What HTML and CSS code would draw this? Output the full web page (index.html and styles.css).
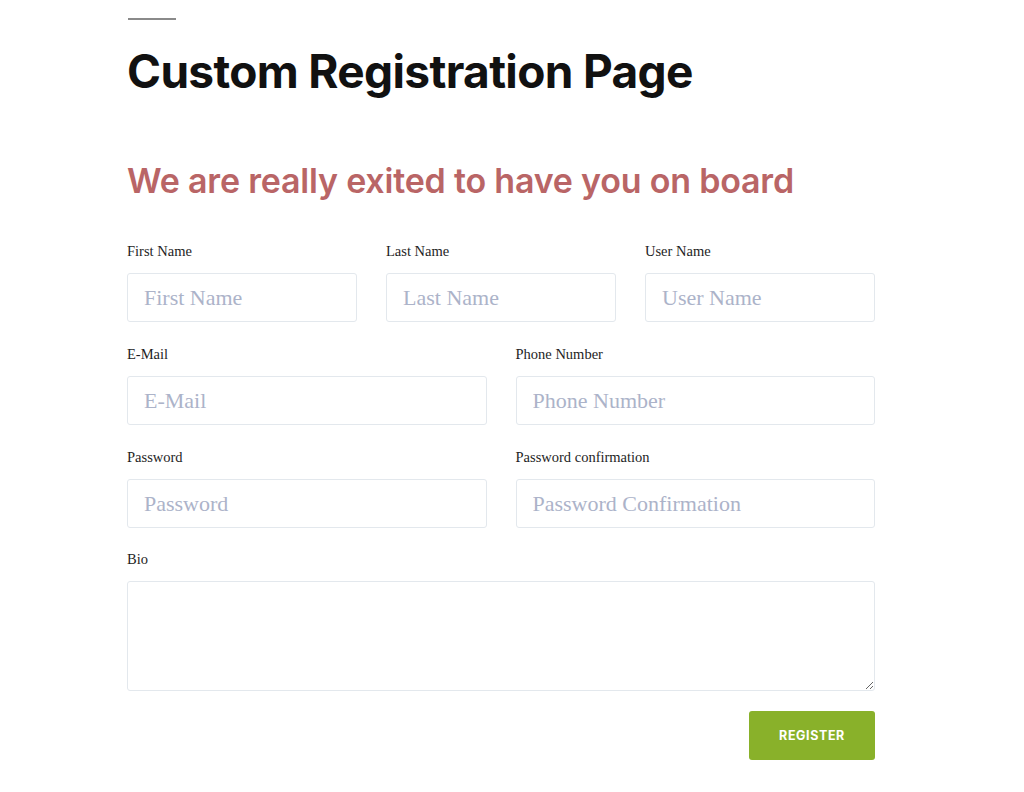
FILE: index.html
```html
<!DOCTYPE html>
<html lang="en">
<head>
  <meta charset="UTF-8" />
  <meta name="viewport" content="width=device-width, initial-scale=1.0"/>
  <title>Custom Registration Page</title>
  <link rel="stylesheet" href="styles.css">
</head>
<body>

<div class="container">
  <div class="rule"></div>
  <h1>Custom Registration Page</h1>

  <h2>We are really exited to have you on board</h2>

  <form class="reg-form" onsubmit="return false;">
    <div class="row row-3">
      <div class="field">
        <label for="first-name">First Name</label>
        <input type="text" id="first-name" placeholder="First Name" />
      </div>
      <div class="field">
        <label for="last-name">Last Name</label>
        <input type="text" id="last-name" placeholder="Last Name" />
      </div>
      <div class="field">
        <label for="user-name">User Name</label>
        <input type="text" id="user-name" placeholder="User Name" />
      </div>
    </div>

    <div class="row row-2">
      <div class="field">
        <label for="email">E-Mail</label>
        <input type="email" id="email" placeholder="E-Mail" />
      </div>
      <div class="field">
        <label for="phone">Phone Number</label>
        <input type="text" id="phone" placeholder="Phone Number" />
      </div>
    </div>

    <div class="row row-2 row-last">
      <div class="field">
        <label for="password">Password</label>
        <input type="password" id="password" placeholder="Password" />
      </div>
      <div class="field">
        <label for="password-confirm">Password confirmation</label>
        <input type="password" id="password-confirm" placeholder="Password Confirmation" />
      </div>
    </div>

    <div class="row">
      <div class="field">
        <label for="bio">Bio</label>
        <textarea id="bio"></textarea>
      </div>
    </div>

    <div class="actions">
      <button type="submit">Register</button>
    </div>
  </form>
</div>

</body>
</html>
```

FILE: styles.css
```css
body {
  margin: 0;
  background: #fff;
  font-family: "Liberation Serif", serif;
  color: #222;
}

.container {
  width: 748px;
  margin: 0 0 0 127px;
  padding-top: 18px;
}

.rule {
  width: 48px;
  height: 2px;
  background: #8a8a8a;
  margin-left: 1px;
}

h1 {
  font-family: Inter, sans-serif;
  font-weight: 700;
  font-size: 46px;
  letter-spacing: -0.65px;
  color: #111;
  margin: 23px 0 0;
  line-height: 56px;
}

h2 {
  font-family: Inter, sans-serif;
  font-weight: 600;
  font-size: 34px;
  letter-spacing: -0.2px;
  color: #b96566;
  margin: 60px 0 0;
  line-height: 44px;
}

.reg-form {
  margin-top: 39px;
}

.row {
  display: grid;
  gap: 29px;
  margin-bottom: 23px;
}

.row-last {
  margin-bottom: 22px;
}

.row-3 {
  grid-template-columns: repeat(3, 1fr);
}

.row-2 {
  grid-template-columns: repeat(2, 1fr);
}

.field label {
  display: block;
  font-size: 14.5px;
  line-height: 18px;
  color: #1e1e1e;
  margin-bottom: 13px;
}

input,
textarea {
  display: block;
  width: 100%;
  box-sizing: border-box;
  border: 1px solid #e3e8ed;
  border-radius: 3px;
  background: #fff;
  font-family: "Liberation Serif", serif;
  font-size: 22px;
  color: #333;
  outline: none;
}

input {
  height: 49px;
  padding: 0 16px;
}

textarea {
  height: 110px;
  padding: 10px 16px;
  resize: vertical;
}

::placeholder {
  color: #acb3c9;
}

.actions {
  display: flex;
  justify-content: flex-end;
  margin-top: -3px;
}

button {
  width: 126px;
  height: 49px;
  background: #89b12a;
  color: #fff;
  border: none;
  border-radius: 3px;
  font-family: Inter, sans-serif;
  font-weight: 700;
  font-size: 12.5px;
  letter-spacing: 0.6px;
  text-transform: uppercase;
  cursor: pointer;
}

button:hover {
  background: #7a9e22;
}
```
